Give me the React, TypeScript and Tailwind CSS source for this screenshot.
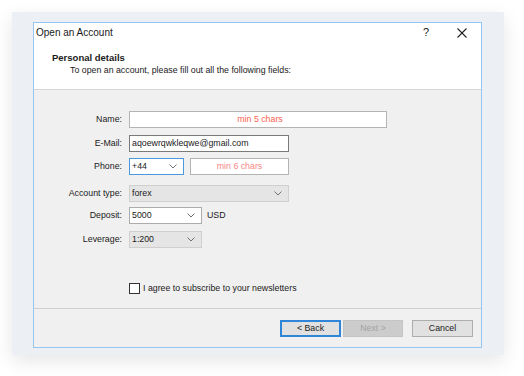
const Chevron = ({ color = '#707070' }: { color?: string }) => (
  <svg width="8" height="5" viewBox="0 0 8 5" fill="none" stroke={color} strokeWidth="1">
    <polyline points="0.5,0.5 4,4 7.5,0.5" />
  </svg>
);

const Combo = ({ value, width, disabled, focused }: { value: string; width: string; disabled?: boolean; focused?: boolean }) => (
  <div
    className={`${width} h-[17px] flex items-center justify-between pl-[2px] pr-[6px] border ${
      disabled ? 'bg-[#e5e5e5] border-[#cfcfcf]' : focused ? 'bg-white border-[#4a98e0]' : 'bg-white border-[#acacac]'
    }`}
  >
    <span>{value}</span>
    <Chevron />
  </div>
);

const Row = ({ label, children, className = '' }: { label: string; children: React.ReactNode; className?: string }) => (
  <div className={`flex items-center ${className}`}>
    <div className="w-[89px] text-right pr-[1px]">{label}</div>
    <div className="ml-[6px] flex items-center">{children}</div>
  </div>
);

export default function App() {
  return (
    <div className="w-[524px] h-[376px] bg-white pt-[12px] pl-[12px] text-[8.8px] text-[#1a1a1a] font-['Liberation_Sans',Arial,sans-serif] leading-[11px]">
      <div className="w-[492px] h-[343px] bg-[#eceff3] shadow-[0_6px_18px_rgba(0,0,0,0.10)] pt-[10px] pl-[21px]">
        <div className="w-[449px] h-[326px] border border-[#96c6f0] flex flex-col bg-[#f0f0f0]">
          {/* header */}
          <div className="h-[67px] bg-white border-b border-[#d6d6d6]">
            <div className="h-[19px] flex items-center pl-[2px] relative">
              <span className="text-[10px]">Open an Account</span>
              <span className="absolute left-[389px] top-[4px] text-[11px] leading-[11px]">?</span>
              <svg className="absolute left-[423px] top-[5px]" width="10" height="10" viewBox="0 0 10 10" stroke="#222" strokeWidth="1.1">
                <line x1="0.5" y1="0.5" x2="9.5" y2="9.5" />
                <line x1="9.5" y1="0.5" x2="0.5" y2="9.5" />
              </svg>
            </div>
            <div className="pl-[18px] mt-[10px] font-bold text-[9.5px]">Personal details</div>
            <div className="pl-[36px] mt-[2px]">To open an account, please fill out all the following fields:</div>
          </div>

          {/* form */}
          <div className="flex-1 pt-[21px] flex flex-col">
            <Row label="Name:">
              <div className="w-[258px] h-[17px] bg-white border border-[#b4b4b4] flex items-center justify-center pl-[4px] text-[#f9624f]">
                min 5 chars
              </div>
            </Row>
            <Row label="E-Mail:" className="mt-[7px]">
              <div className="w-[160px] h-[17px] bg-white border border-[#7a7a7a] flex items-center pl-[2px]">
                aqoewrqwkleqwe@gmail.com
              </div>
            </Row>
            <Row label="Phone:" className="mt-[6px]">
              <Combo value="+44" width="w-[55px]" focused />
              <div className="ml-[6px] w-[99px] h-[17px] bg-white border border-[#b4b4b4] flex items-center justify-center text-[#f78585]">
                min 6 chars
              </div>
            </Row>
            <Row label="Account type:" className="mt-[10px]">
              <Combo value="forex" width="w-[160px]" disabled />
            </Row>
            <Row label="Deposit:" className="mt-[5px]">
              <Combo value="5000" width="w-[73px]" />
              <span className="ml-[5px]">USD</span>
            </Row>
            <Row label="Leverage:" className="mt-[7px]">
              <Combo value="1:200" width="w-[73px]" disabled />
            </Row>
            <div className="mt-[35px] ml-[95px] flex items-center">
              <div className="w-[11px] h-[11px] border border-[#333] bg-white" />
              <span className="ml-[3px]">I agree to subscribe to your newsletters</span>
            </div>
          </div>

          {/* buttons */}
          <div className="h-[39px] border-t border-[#cfcfcf] flex items-center justify-end pr-[8px] pt-[1px]">
            <button className="w-[61px] h-[17px] border-2 border-[#2f86d8] bg-[#e1e1e1] flex items-center justify-center leading-none">
              &lt; Back
            </button>
            <button className="ml-[2px] w-[60px] h-[17px] border border-[#c4c4c4] bg-[#cccccc] text-[#a3a3a3] flex items-center justify-center leading-none">
              Next &gt;
            </button>
            <button className="ml-[9px] w-[61px] h-[17px] border border-[#adadad] bg-[#e1e1e1] flex items-center justify-center leading-none">
              Cancel
            </button>
          </div>
        </div>
      </div>
    </div>
  );
}
